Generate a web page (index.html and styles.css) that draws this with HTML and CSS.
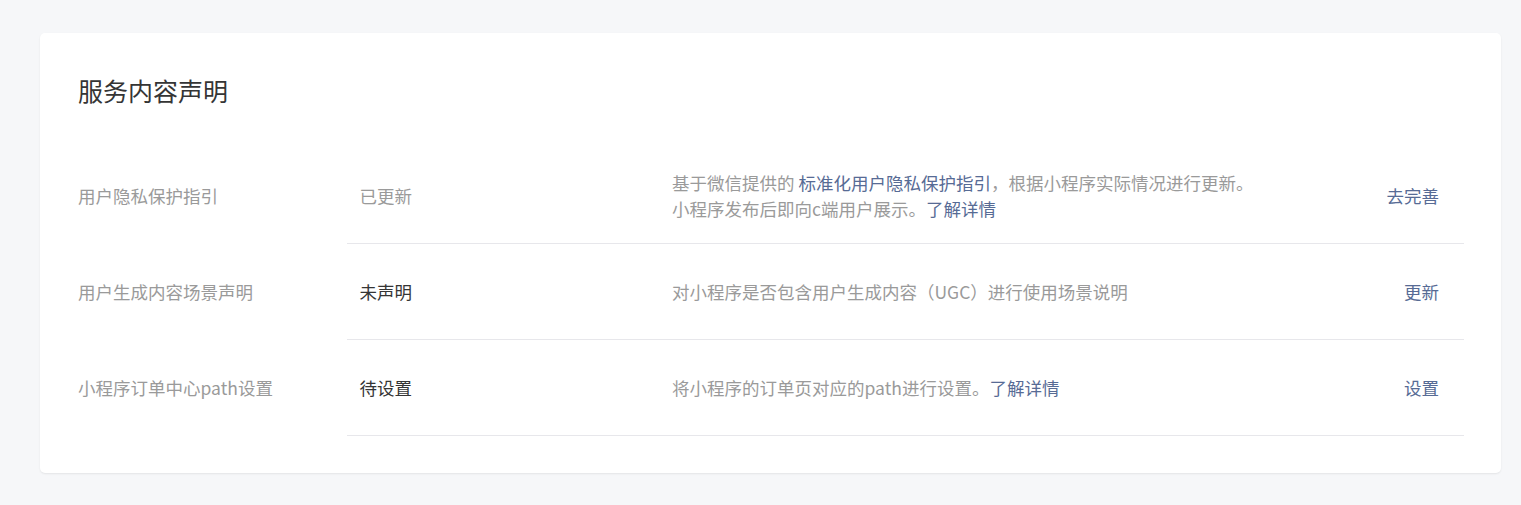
FILE: index.html
```html
<!DOCTYPE html>
<html lang="zh-CN">
<head>
<meta charset="utf-8">
<title>服务内容声明</title>
<link rel="stylesheet" href="styles.css">
</head>
<body>
<div class="card">
  <h2 class="card-title">服务内容声明</h2>
  <table class="decl-table">
    <colgroup>
      <col class="col-label">
      <col class="col-status">
      <col class="col-desc">
      <col class="col-action">
    </colgroup>
    <tbody>
      <tr>
        <th class="cell-label">用户隐私保护指引</th>
        <td class="cell-status muted">已更新</td>
        <td class="cell-desc">基于微信提供的 <a class="link" href="#">标准化用户隐私保护指引</a>，根据小程序实际情况进行更新。<br>小程序发布后即向c端用户展示。<a class="link" href="#">了解详情</a></td>
        <td class="cell-action"><a class="link" href="#">去完善</a></td>
      </tr>
      <tr>
        <th class="cell-label">用户生成内容场景声明</th>
        <td class="cell-status">未声明</td>
        <td class="cell-desc">对小程序是否包含用户生成内容（UGC）进行使用场景说明</td>
        <td class="cell-action"><a class="link" href="#">更新</a></td>
      </tr>
      <tr>
        <th class="cell-label">小程序订单中心path设置</th>
        <td class="cell-status">待设置</td>
        <td class="cell-desc">将小程序的订单页对应的path进行设置。<a class="link" href="#">了解详情</a></td>
        <td class="cell-action"><a class="link" href="#">设置</a></td>
      </tr>
    </tbody>
  </table>
</div>
</body>
</html>
```

FILE: styles.css
```css
html, body {
  margin: 0;
  padding: 0;
}
body {
  background: #f6f7f9;
  font-family: "Noto Sans CJK SC", "Noto Sans", "Liberation Sans", sans-serif;
  color: #353535;
  padding: 33px 20px 32px 40px;
}
.card {
  background: #fff;
  border-radius: 5px;
  box-shadow: 0 1px 2px rgba(0, 0, 0, 0.08);
  padding: 40px 37px 37px 38px;
}
.card-title {
  margin: 0 0 40px;
  font-size: 25px;
  line-height: 35px;
  font-weight: 400;
  color: #353535;
}
.decl-table {
  width: 100%;
  border-collapse: collapse;
  table-layout: fixed;
  font-size: 17.5px;
  line-height: 26px;
}
.col-label { width: 269px; }
.col-status { width: 312.5px; }
.col-action { width: 150px; }
.decl-table th,
.decl-table td {
  height: 95px;
  padding: 0;
  vertical-align: middle;
  text-align: left;
  font-weight: 400;
}
.decl-table td {
  border-bottom: 1px solid #e7e7eb;
}
.cell-label {
  color: #9a9a9a;
}
.cell-status {
  padding-left: 12.5px !important;
  color: #353535;
}
.cell-status.muted {
  color: #9a9a9a;
}
.cell-desc {
  padding-left: 12.5px !important;
  color: #9a9a9a;
}
.cell-action {
  text-align: right !important;
  padding-right: 25px !important;
}
.link {
  color: #576b95;
  text-decoration: none;
}
```
